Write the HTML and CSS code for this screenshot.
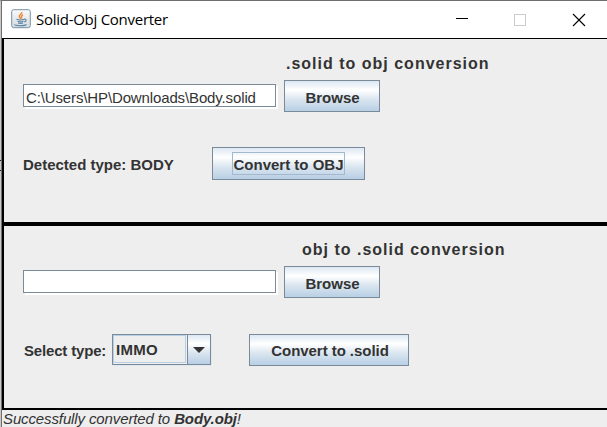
FILE: index.html
```
<!DOCTYPE html>
<html lang="en">
<head>
<meta charset="utf-8">
<title>Solid-Obj Converter</title>
<link rel="stylesheet" href="styles.css">
</head>
<body>
<div class="window">
  <header class="titlebar">
    <svg class="app-icon" width="20" height="20" viewBox="0 0 20 20">
      <defs><linearGradient id="tile" x1="0" y1="0" x2="0" y2="1"><stop offset="0" stop-color="#fafafa"/><stop offset="1" stop-color="#d3dae0"/></linearGradient></defs>
      <rect x=".7" y=".7" width="18.6" height="18" rx="2" fill="url(#tile)" stroke="#7890a3"/>
      <path d="M10.7 3c.8 2-3.200 2.800-2.300 5 .3.800 1.200 1 1.200 1.900M12 5.600c-2.400 1.500-1.200 2-1.500 3.700" fill="none" stroke="#ef8b3d" stroke-width="1.500"/>
      <path d="M5.500 10.300c2 .7 5.500.7 7.700 0M6.500 12.200c2 .7 4.500.7 6 0M7 14c1.500.5 3.500.5 5 0M13 10.200c3-.5 2.500 2.300.2 2.700M4 15.300c-1.500 1.800 9.800 2 11.500.1" fill="none" stroke="#55809f" stroke-width="1.100"/>
    </svg>
    <h1 class="title">Solid-Obj Converter</h1>
    <svg class="controls" width="131" height="14" viewBox="0 0 131 14" shape-rendering="crispEdges">
      <path d="M0 5.500h12" stroke="#000"/>
      <rect x="58.500" y="1.500" width="11" height="11" fill="none" stroke="#ccc"/>
      <path d="M117 1l12 12M129 1l-12 12" stroke="#000" stroke-width="1.100" shape-rendering="auto"/>
    </svg>
  </header>
  <main>
    <section class="panel panel-solid">
      <h2 class="heading">.solid to obj conversion</h2>
      <div class="file-row">
        <div class="field"><span class="path">C:\Users\HP\Downloads\Body.solid</span></div>
        <div class="button browse">Browse</div>
      </div>
      <div class="action-row">
        <span class="label detected">Detected type: BODY</span>
        <div class="button to-obj"><span class="focus">Convert to OBJ</span></div>
      </div>
    </section>
    <section class="panel panel-obj">
      <h2 class="heading">obj to .solid conversion</h2>
      <div class="file-row">
        <div class="field"></div>
        <div class="button browse">Browse</div>
      </div>
      <div class="action-row">
        <span class="label select-label">Select type:</span>
        <div class="combo">
          <span class="value">IMMO</span>
          <span class="arrow"><svg width="12" height="6" viewBox="0 0 12 6"><path d="M0 0h12L6 6z" fill="#333"/></svg></span>
        </div>
        <div class="button to-solid">Convert to .solid</div>
      </div>
    </section>
  </main>
  <footer class="status">Successfully converted to <b>Body.obj</b>!</footer>
</div>
</body>
</html>
```
FILE: styles.css
```
* { box-sizing: border-box; }
body {
  margin: 0;
  width: 607px;
  height: 427px;
  overflow: hidden;
  background: #eee;
  color: #333;
  font: bold 15px/18px "Liberation Sans", Arial, sans-serif;
}
h1, h2 { margin: 0; font: inherit; }
.window {
  height: 427px;
  border-left: 1px solid #c8c8c8;
  border-top: 1px solid #6e6e6e;
  padding-left: 1px;
  background: linear-gradient(#707070, #707070) 0 0 / 1px 100% no-repeat;
  white-space: nowrap;
}
/* Edge of the window behind */
.window::before {
  content: "";
  position: absolute;
  left: 0;
  top: 160px;
  width: 1px;
  height: 9px;
  border: solid #222;
  border-width: 1px 0;
}
.titlebar {
  display: flex;
  align-items: flex-start;
  height: 37px;
  padding: 8px 20px 0 9px;
  background: #fff;
}
.title {
  margin: 0 0 0 5px;
  font: 15px/20px "Open Sans", "Noto Sans", sans-serif;
  letter-spacing: -.27px;
  color: #000;
}
.controls { margin: 4px 0 0 auto; }
.panel { border-left: 2px solid #000; padding-left: 19px; }
.panel-solid {
  height: 186px;
  border-top: 1px solid #000;
  border-bottom: 2px solid #000;
  padding-top: 15px;
}
.panel-obj {
  height: 186px;
  border-top: 2px solid #000;
  border-bottom: 2px solid #000;
  padding-top: 14px;
}
.heading {
  padding-left: 263px;
  font-size: 16px;
  line-height: 20px;
  letter-spacing: 1px;
}
.panel-obj .heading { padding-left: 279px; }
.file-row { display: flex; margin-top: 6px; gap: 8px; }
.field {
  width: 253px;
  height: 23px;
  margin-top: 4px;
  padding: 4px 2px;
  border: 1px solid #7a8a99;
  background: #fff;
  box-shadow: 2px 2px #fff;
  font-weight: normal;
  letter-spacing: -.13px;
}
.button {
  display: flex;
  justify-content: center;
  align-items: center;
  border: 1px solid #7a8a99;
  background: linear-gradient(#dde8f3 0, #fff 30%, #dbe6f0 60%, #b8cfe5 100%);
}
.browse { width: 96px; height: 32px; padding: 3px 0 0 1px; }
.action-row { display: flex; margin-top: 35px; }
.label { padding-top: 9px; }
.detected { width: 189px; }
.to-obj { width: 153px; height: 33px; }
.focus {
  width: 113px;
  height: 23px;
  padding-top: 3px;
  border: 1px solid #a3b8cc;
  text-align: center;
}
.panel-obj .action-row { margin-top: 36px; }
.panel-obj .label { padding-top: 8px; }
.select-label { width: 89px; padding-left: 1px; letter-spacing: -.17px; }
.combo {
  display: flex;
  width: 99px;
  height: 31px;
  border: 1px solid #7a8a99;
  box-shadow: 1px 1px #dfe8f1;
}
.value {
  width: 73px;
  height: 28px;
  margin-right: 1px;
  padding: 5px 0 0 2px;
  border: 1px solid #b8cfe5;
  letter-spacing: .3px;
}
.arrow {
  display: flex;
  flex: 1;
  justify-content: center;
  align-items: center;
  border-left: 1px solid #7a8a99;
  background: linear-gradient(#dde8f3 0, #fff 30%, #dbe6f0 60%, #b8cfe5 100%);
}
.to-solid { width: 160px; height: 32px; margin-left: 38px; padding: 2px 0 0 2px; letter-spacing: -.05px; }
.status { padding-left: 1px; font-weight: normal; font-style: italic; letter-spacing: -.12px; }
```
